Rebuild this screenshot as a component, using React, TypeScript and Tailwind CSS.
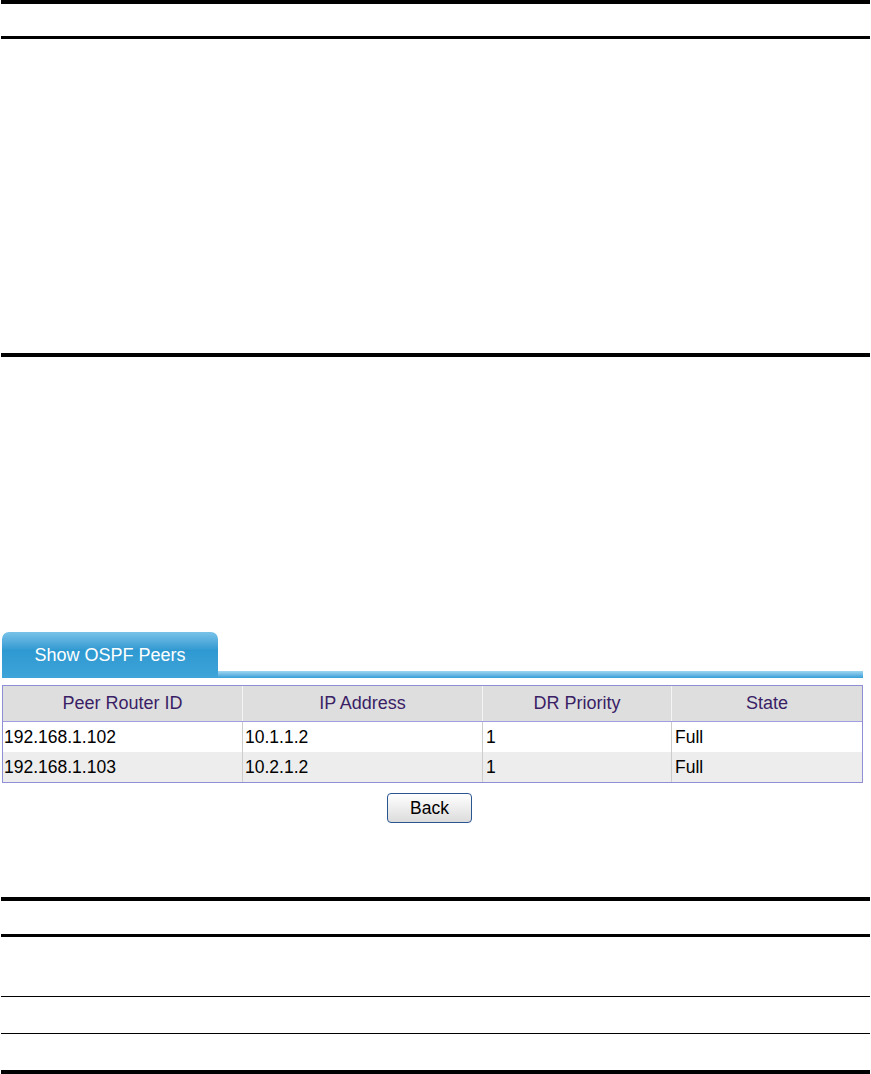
const peers = [
  { id: '192.168.1.102', ip: '10.1.1.2', pri: '1', state: 'Full' },
  { id: '192.168.1.103', ip: '10.2.1.2', pri: '1', state: 'Full' },
];

const cols = 'grid grid-cols-[240px_240px_189px_1fr]';

function Rule({ className }: { className: string }) {
  return <div className={`mx-[1px] bg-black ${className}`} />;
}

export default function App() {
  return (
    <div className="w-[871px] h-[1074px] bg-white flex flex-col font-['Liberation_Sans',Arial,sans-serif] overflow-hidden">
      <Rule className="h-[4px]" />
      <Rule className="mt-[32px] h-[3px]" />
      <Rule className="mt-[314px] h-[4px]" />

      {/* tab bar */}
      <div className="mt-[275px] flex items-end h-[46px]">
        <div className="ml-[2px] w-[216px] h-[46px] rounded-t-[7px] bg-gradient-to-b from-[#78c2e9] via-[#2e99d1] via-40% to-[#3ea4d9] flex items-center justify-center text-white text-[18px] pt-[2px]">
          Show OSPF Peers
        </div>
        <div className="flex-1 mr-[8px] h-[7px] bg-gradient-to-b from-[#9fd6f1] to-[#349fd6]" />
      </div>

      {/* peers table */}
      <div className="mt-[7px] ml-[2px] w-[861px] border border-[#8f8fd6]">
        <div className={`${cols} h-[36px] bg-[#dedede] border-b border-[#9e9ee0] text-[#3a1f66] text-[18px]`}>
          <div className="flex items-center justify-center border-r border-[#f4f4f4]">Peer Router ID</div>
          <div className="flex items-center justify-center border-r border-[#f4f4f4]">IP Address</div>
          <div className="flex items-center justify-center border-r border-[#f4f4f4]">DR Priority</div>
          <div className="flex items-center justify-center">State</div>
        </div>
        {peers.map((p, i) => (
          <div
            key={p.id}
            className={`${cols} h-[30px] text-[17.5px] text-black ${i % 2 === 1 ? 'bg-[#ededed]' : 'bg-white'}`}
          >
            <div className="flex items-center pl-[1px] border-r border-[#cccccc]">{p.id}</div>
            <div className="flex items-center pl-[2px] border-r border-[#cccccc]">{p.ip}</div>
            <div className="flex items-center pl-[3px] border-r border-[#cccccc]">{p.pri}</div>
            <div className="flex items-center pl-[3px]">{p.state}</div>
          </div>
        ))}
      </div>

      <button className="mt-[10px] ml-[387px] w-[85px] h-[31px] rounded-[4px] border border-[#2a5590] bg-gradient-to-b from-white to-[#dcdcdc] text-[17.5px] text-black">
        Back
      </button>

      <Rule className="mt-[74px] h-[4px]" />
      <Rule className="mt-[33px] h-[3px]" />
      <Rule className="mt-[59px] h-[1px]" />
      <Rule className="mt-[36px] h-[1px]" />
      <Rule className="mt-[36px] h-[4px]" />
    </div>
  );
}
